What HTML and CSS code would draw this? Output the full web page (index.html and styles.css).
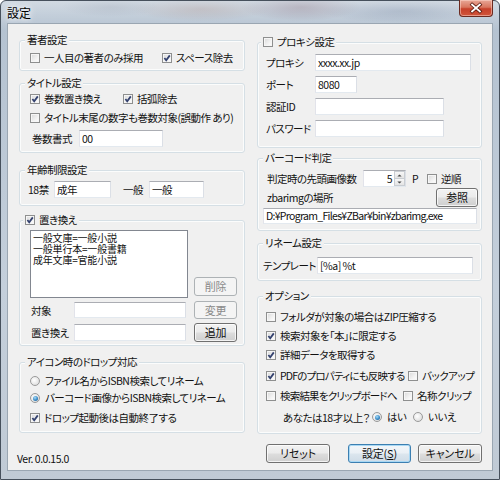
FILE: index.html
```html
<!DOCTYPE html>
<html lang="ja">
<head>
<meta charset="utf-8">
<title>設定</title>
<link rel="stylesheet" href="styles.css">
</head>
<body>
<div class="window">
  <div class="titlebar">
    <span class="title">設定</span>
    <span class="close"><svg viewBox="0 0 33 16" width="33" height="16"><path d="M12.5 4.5 L20.5 11.5 M20.5 4.5 L12.5 11.5" class="x-out"/><path d="M12.5 4.5 L20.5 11.5 M20.5 4.5 L12.5 11.5" class="x-in"/></svg></span>
  </div>
  <div class="client">
    <div class="col col-left">
      <div class="group g1">
        <div class="legend">著者設定</div>
        <div class="row">
          <span class="chk w132"><span class="cb"></span>一人目の著者のみ採用</span>
          <span class="chk"><span class="cb on"><svg viewBox="0 0 8 8"><path d="M1.4 4 L3.2 6.2 L6.8 1.4"/></svg></span>スペース除去</span>
        </div>
      </div>

      <div class="group g2">
        <div class="legend">タイトル設定</div>
        <div class="row">
          <span class="chk w93"><span class="cb on"><svg viewBox="0 0 8 8"><path d="M1.4 4 L3.2 6.2 L6.8 1.4"/></svg></span>巻数置き換え</span>
          <span class="chk"><span class="cb on"><svg viewBox="0 0 8 8"><path d="M1.4 4 L3.2 6.2 L6.8 1.4"/></svg></span>括弧除去</span>
        </div>
        <div class="row mt5">
          <span class="chk"><span class="cb"></span>タイトル末尾の数字も巻数対象(誤動作 あり)</span>
        </div>
        <div class="row field mt5">
          <span class="lbl lbl-volfmt">巻数書式</span>
          <span class="input w84">00</span>
        </div>
      </div>

      <div class="group g3">
        <div class="legend">年齢制限設定</div>
        <div class="row field">
          <span class="lbl lbl-18">18禁</span>
          <span class="input w57">成年</span>
          <span class="lbl lbl-gen">一般</span>
          <span class="input w55">一般</span>
        </div>
      </div>

      <div class="group g4">
        <div class="legend legend-chk"><span class="cb on"><svg viewBox="0 0 8 8"><path d="M1.4 4 L3.2 6.2 L6.8 1.4"/></svg></span>置き換え</div>
        <div class="row rep-top">
          <div class="listbox">
            <div class="li">一般文庫=一般小説</div>
            <div class="li">一般単行本=一般書籍</div>
            <div class="li">成年文庫=官能小説</div>
          </div>
          <span class="btn disabled b-del">削除</span>
        </div>
        <div class="row rep-row mt3">
          <span class="lbl lbl-rep">対象</span>
          <span class="input w112 h16"></span>
          <span class="btn disabled b-side h18">変更</span>
        </div>
        <div class="row rep-row mt4">
          <span class="lbl lbl-rep">置き換え</span>
          <span class="input w112"></span>
          <span class="btn b-side">追加</span>
        </div>
      </div>

      <div class="group g5">
        <div class="legend">アイコン時のドロップ対応</div>
        <div class="row">
          <span class="chk rad"><span class="rb"></span>ファイル名からISBN検索してリネーム</span>
        </div>
        <div class="row mt3">
          <span class="chk rad"><span class="rb on"></span>バーコード画像からISBN検索してリネーム</span>
        </div>
        <div class="row mt6">
          <span class="chk"><span class="cb on"><svg viewBox="0 0 8 8"><path d="M1.4 4 L3.2 6.2 L6.8 1.4"/></svg></span>ドロップ起動後は自動終了する</span>
        </div>
      </div>

      <div class="version">Ver. 0.0.15.0</div>
    </div>

    <div class="col col-right">
      <div class="group r1">
        <div class="legend legend-chk"><span class="cb"></span>プロキシ設定</div>
        <div class="row field">
          <span class="lbl lbl-proxy">プロキシ</span>
          <span class="input w156">xxxx.xx.jp</span>
        </div>
        <div class="row field mt5">
          <span class="lbl lbl-proxy">ポート</span>
          <span class="input w42">8080</span>
        </div>
        <div class="row field mt5">
          <span class="lbl lbl-proxy">認証ID</span>
          <span class="input w129"></span>
        </div>
        <div class="row field mt5">
          <span class="lbl lbl-proxy">パスワード</span>
          <span class="input w129"></span>
        </div>
      </div>

      <div class="group r2">
        <div class="legend">バーコード判定</div>
        <div class="row field">
          <span class="lbl lbl-head">判定時の先頭画像数</span>
          <span class="spin"><span class="spin-val">5</span><span class="spin-btns"><span class="sb"><svg viewBox="0 0 7 4"><path d="M0.5 3.5 L3.5 0.5 L6.5 3.5Z"/></svg></span><span class="sb"><svg viewBox="0 0 7 4"><path d="M0.5 0.5 L3.5 3.5 L6.5 0.5Z"/></svg></span></span></span>
          <span class="unit">P</span>
          <span class="chk rev"><span class="cb"></span>逆順</span>
        </div>
        <div class="row zrow">
          <span class="lbl lbl-z">zbarimgの場所</span>
          <span class="btn b-ref">参照</span>
        </div>
        <div class="row path-row">
          <span class="input w214 h16 path">D:¥Program_Files¥ZBar¥bin¥zbarimg.exe</span>
        </div>
      </div>

      <div class="group r3">
        <div class="legend">リネーム設定</div>
        <div class="row field">
          <span class="lbl lbl-tpl">テンプレート</span>
          <span class="input w156">[%a] %t</span>
        </div>
      </div>

      <div class="group r4">
        <div class="legend">オプション</div>
        <div class="row">
          <span class="chk"><span class="cb"></span>フォルダが対象の場合はZIP圧縮する</span>
        </div>
        <div class="row mt5">
          <span class="chk"><span class="cb on"><svg viewBox="0 0 8 8"><path d="M1.4 4 L3.2 6.2 L6.8 1.4"/></svg></span>検索対象を「本」に限定する</span>
        </div>
        <div class="row mt5">
          <span class="chk"><span class="cb on"><svg viewBox="0 0 8 8"><path d="M1.4 4 L3.2 6.2 L6.8 1.4"/></svg></span>詳細データを取得する</span>
        </div>
        <div class="row mt7">
          <span class="chk w142 tight"><span class="cb on"><svg viewBox="0 0 8 8"><path d="M1.4 4 L3.2 6.2 L6.8 1.4"/></svg></span>PDFのプロパティにも反映する</span>
          <span class="chk"><span class="cb"></span>バックアップ</span>
        </div>
        <div class="row mt6">
          <span class="chk w137 tight"><span class="cb"></span>検索結果をクリップボードへ</span>
          <span class="chk"><span class="cb"></span>名称クリップ</span>
        </div>
        <div class="row mt7">
          <span class="ask">あなたは18才以上？</span>
          <span class="chk rad w41"><span class="rb on"></span>はい</span>
          <span class="chk rad"><span class="rb"></span>いいえ</span>
        </div>
      </div>

      <div class="buttons">
        <span class="btn b-main">リセット</span>
        <span class="btn b-main default">設定(<u>S</u>)</span>
        <span class="btn b-main">キャンセル</span>
      </div>
    </div>
  </div>
</div>
</body>
</html>
```

FILE: styles.css
```css
* { box-sizing: border-box; }

html, body {
  margin: 0;
  padding: 0;
  width: 500px;
  height: 480px;
  overflow: hidden;
  background: #ffffff;
}

body {
  font-family: "Noto Sans CJK JP", "Noto Sans", sans-serif;
  font-feature-settings: "palt";
  font-size: 10.5px;
  letter-spacing: -0.5px;
  color: #111;
}

.window {
  width: 500px;
  height: 480px;
  border: 1px solid #46505c;
  border-radius: 6px 6px 0 0;
  padding: 0 7px 9px 7px;
  display: flex;
  flex-direction: column;
  background:
    linear-gradient(180deg, rgba(255,255,255,0.4) 0px, rgba(255,255,255,0.1) 22px, rgba(255,255,255,0) 30px),
    radial-gradient(ellipse 60px 14px at 300px 6px, rgba(110,80,100,0.4), rgba(110,80,100,0)),
    radial-gradient(ellipse 70px 12px at 200px 8px, rgba(150,110,100,0.3), rgba(150,110,100,0)),
    radial-gradient(ellipse 80px 12px at 400px 10px, rgba(80,100,135,0.3), rgba(80,100,135,0)),
    radial-gradient(ellipse 50px 10px at 110px 6px, rgba(90,100,120,0.2), rgba(90,100,120,0)),
    linear-gradient(180deg, #b3c1d0, #c4cfdb 60%, #c0cad5);
}

.titlebar {
  height: 23px;
  display: flex;
  align-items: flex-start;
}

.title {
  margin-left: -1px;
  line-height: 24px;
  font-size: 12px;
  letter-spacing: 0;
  color: #000;
  text-shadow: 0 0 5px #fff, 0 0 8px #fff;
}

.close {
  margin-left: auto;
  margin-top: -1px;
  margin-right: -1px;
  width: 34px;
  height: 17px;
  border: 1px solid #6b2a20;
  border-top: none;
  border-radius: 0 0 4px 4px;
  background: linear-gradient(180deg, #e8a797 0%, #d8765f 45%, #c6402a 55%, #d0553b 100%);
  box-shadow: inset 0 0 0 1px rgba(255,220,210,0.5);
  display: flex;
  align-items: center;
  justify-content: center;
}
.close svg { display: block; }
.x-out { stroke: #5a1a10; stroke-width: 3.6; stroke-linecap: square; fill: none; }
.x-in { stroke: #ffffff; stroke-width: 2; stroke-linecap: square; fill: none; }

.client {
  flex: 1;
  background: #f0f0f0;
  box-shadow: 0 0 0 1px #9aa6b2;
  display: flex;
  padding: 16px 0 0 11px;
}

.col { display: flex; flex-direction: column; }
.col-left { width: 226px; }
.col-right { width: 225px; margin-left: 12px; margin-top: 2px; }

.group {
  position: relative;
  border: 1px solid #d5dfe5;
  border-radius: 3px;
  box-shadow: inset 0 0 0 1px #fbfcfc;
}

.legend {
  position: absolute;
  top: -8px;
  left: 5px;
  padding: 0 2px;
  line-height: 14px;
  background: #f0f0f0;
  display: flex;
  align-items: center;
  white-space: nowrap;
}
.legend-chk { left: 3px; }
.legend-chk .cb { margin-right: 4px; }

.g1 { height: 31px; padding: 10px 0 0 10px; }
.g2 { height: 70px; margin-top: 12px; padding: 8px 0 0 10px; }
.g3 { height: 36px; margin-top: 17px; padding: 10px 0 0 10px; }
.g4 { height: 126px; margin-top: 14px; padding: 9px 0 0 10px; }
.g5 { height: 71px; margin-top: 16px; padding: 11px 0 0 10px; }

.r1 { height: 106px; padding: 11px 0 0 8px; }
.r2 { height: 73px; margin-top: 10px; padding: 11px 0 0 5px; }
.r3 { height: 38px; margin-top: 12px; padding: 13px 0 0 5px; }
.r4 { height: 138px; margin-top: 15px; padding: 13px 0 0 8px; }

.row {
  display: flex;
  align-items: center;
  height: 14px;
  white-space: nowrap;
}
.row.field { height: 17px; }

.mt3 { margin-top: 3px; }
.mt4 { margin-top: 4px; }
.mt5 { margin-top: 5px; }
.mt6 { margin-top: 6px; }
.mt7 { margin-top: 7px; }

.chk {
  display: flex;
  align-items: center;
  line-height: 14px;
}
.chk .cb { margin-right: 4px; }
.chk.rad .rb { margin-right: 5px; }
.chk.tight { letter-spacing: -0.8px; }

.w132 { width: 132px; }
.w93 { width: 93px; }
.w142 { width: 142px; }
.w137 { width: 137px; }
.w41 { width: 41px; }

.cb {
  width: 10px;
  height: 10px;
  flex: none;
  border: 1px solid #8e8f8f;
  background: linear-gradient(135deg, #d8d8d8 0%, #f2f2f2 60%, #ffffff 100%);
  box-shadow: inset 0 0 0 1px #f6f6f6;
  display: flex;
  align-items: center;
  justify-content: center;
}
.cb svg { width: 8px; height: 8px; display: block; }
.cb path { fill: none; stroke: #34426f; stroke-width: 1.8; }

.rb {
  width: 10px;
  height: 10px;
  flex: none;
  border-radius: 50%;
  border: 1px solid #9a9a9a;
  background: radial-gradient(circle at 40% 40%, #ffffff 0%, #e6e6e6 60%, #d2d2d2 100%);
  display: flex;
  align-items: center;
  justify-content: center;
}
.rb.on::after {
  content: "";
  width: 5px;
  height: 5px;
  border-radius: 50%;
  background: radial-gradient(circle at 40% 35%, #a8dcf8 0%, #3a8cc8 55%, #1a4f80 100%);
}

.lbl { line-height: 17px; }
.lbl-volfmt { width: 47px; margin-left: 2px; }
.lbl-18 { width: 26px; margin-left: -2px; }
.lbl-gen { width: 26px; margin-left: 12px; }
.lbl-rep { width: 43px; margin-left: 1px; }
.lbl-proxy { width: 49px; }
.lbl-head { width: 96px; margin-left: 4px; }
.lbl-z { margin-left: 4px; }
.lbl-tpl { width: 54px; }

.input {
  height: 17px;
  background: #ffffff;
  border: 1px solid;
  border-color: #abadb3 #dbdfe6 #e3e9ef #e2e3ea;
  padding: 0 2px;
  line-height: 15px;
  font-size: 10.5px;
  color: #111;
  overflow: hidden;
  white-space: nowrap;
}
.input.path { font-size: 10.5px; letter-spacing: -0.7px; }
.h16 { height: 16px; line-height: 14px; }
.w84 { width: 84px; }
.w57 { width: 57px; }
.w55 { width: 55px; }
.w112 { width: 112px; }
.w156 { width: 156px; }
.w42 { width: 42px; }
.w129 { width: 129px; }
.w214 { width: 214px; }

.listbox {
  width: 158px;
  height: 68px;
  background: #fff;
  border: 1px solid #828790;
  padding: 1px 0 0 2px;
  font-size: 10px;
  letter-spacing: -0.2px;
}
.li { height: 11px; line-height: 11px; }

.btn {
  display: flex;
  align-items: center;
  justify-content: center;
  height: 19px;
  border: 1px solid #707070;
  border-radius: 3px;
  background: linear-gradient(180deg, #f2f2f2 0%, #ebebeb 48%, #dddddd 52%, #cfcfcf 100%);
  box-shadow: inset 0 0 0 1px rgba(255,255,255,0.75);
  font-size: 11px;
  line-height: 17px;
  letter-spacing: -0.2px;
  color: #111;
  white-space: nowrap;
}
.btn.disabled {
  border-color: #adb2b5;
  background: #f4f4f4;
  box-shadow: none;
  color: #8a8a8a;
}
.btn.default {
  border-color: #3c7fb1;
  box-shadow: inset 0 0 0 1px #a8d8f4;
  background: linear-gradient(180deg, #f2f6f9 0%, #eaf0f5 48%, #dce6ee 52%, #cfdce7 100%);
}
.btn u { text-decoration: underline; }
.h18 { height: 18px; }

.rep-top { height: 68px; align-items: flex-end; }
.b-del { width: 43px; margin-left: 6px; margin-bottom: 2px; }
.rep-row { height: 18px; }
.rep-row .input { height: 16px; line-height: 14px; }
.rep-row + .rep-row { height: 19px; }
.rep-row + .rep-row .input { height: 17px; line-height: 15px; }
.b-side { width: 43px; margin-left: 8px; }

.spin {
  width: 43px;
  height: 17px;
  background: #fff;
  border: 1px solid;
  border-color: #abadb3 #dbdfe6 #e3e9ef #e2e3ea;
  display: flex;
}
.spin-val { flex: 1; text-align: right; padding-right: 2px; line-height: 15px; }
.spin-btns { width: 11px; display: flex; flex-direction: column; }
.sb {
  flex: 1;
  border: 1px solid #c9cdd2;
  background: linear-gradient(180deg, #f7f7f7, #e4e4e4);
  display: flex;
  align-items: center;
  justify-content: center;
}
.sb + .sb { border-top: none; }
.sb svg { width: 5px; height: 3px; display: block; }
.sb path { fill: #4a4a4a; }
.unit { margin-left: 6px; width: 8px; }
.chk.rev { margin-left: 7px; }

.zrow { height: 19px; margin-top: 1px; justify-content: space-between; padding-right: 3px; }
.b-ref { width: 42px; }
.path-row { height: 16px; margin-top: 1px; }

.ask { margin-left: 17px; width: 89px; }

.buttons {
  display: flex;
  margin-top: 10px;
  padding-left: 9px;
}
.b-main { width: 64px; }
.b-main.default { width: 63px; margin-left: 18px; }
.b-main.default + .b-main { margin-left: 7px; }

.version {
  margin-top: 19px;
  margin-left: -2px;
  line-height: 14px;
}
```
